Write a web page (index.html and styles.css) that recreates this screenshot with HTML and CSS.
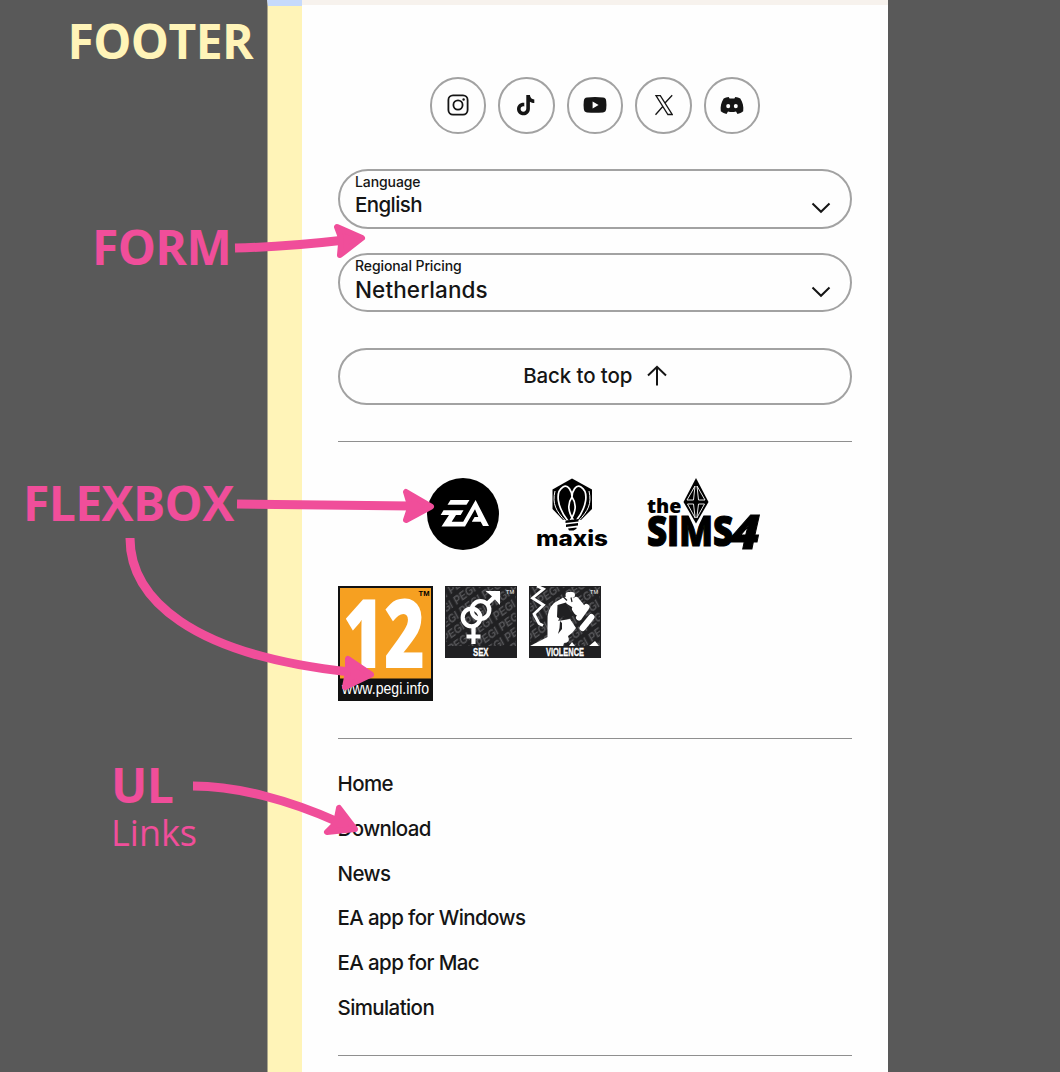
FILE: index.html
```html
<!DOCTYPE html>
<html lang="en">
<head>
<meta charset="utf-8">
<title>Footer structure</title>
<link rel="stylesheet" href="styles.css">
</head>
<body>
<div class="board">
  <aside class="notes">
    <h1 class="note note-footer">FOOTER</h1>
    <h2 class="note note-form">FORM</h2>
    <h2 class="note note-flex">FLEXBOX</h2>
    <h2 class="note note-ul">UL</h2>
    <p class="note-sub">Links</p>
  </aside>
  <div class="strip"></div>
  <footer class="panel">
    <nav class="social">
      <a class="circle"><svg width="22" height="22" viewBox="0 0 22 22" fill="none" stroke="#151515" stroke-width="1.8"><rect x="1.4" y="1.4" width="19.2" height="19.2" rx="4.6"/><circle cx="11" cy="11" r="4.6"/><circle cx="16.6" cy="5.5" r="1.2" fill="#151515" stroke="none"/></svg></a>
      <a class="circle"><svg width="20" height="22" viewBox="0 0 20 22" fill="#151515"><path d="M10.3 1h3.6c.3 2.7 1.8 4.3 4.4 4.5v3.6c-1.6 0-3.100-.5-4.400-1.400v7c0 4-2.900 6.600-6.500 6.600C3.800 21.300 1 18.500 1 15c0-3.900 3.100-6.700 7.300-6.300v3.700c-2-.5-3.700.7-3.700 2.600 0 1.600 1.200 2.700 2.700 2.700 1.800 0 3-1.200 3-3.200z"/></svg></a>
      <a class="circle"><svg width="24" height="18" viewBox="0 0 24 18" fill="#151515"><path fill-rule="evenodd" d="M4 1.500Q12 .6 20 1.500Q23 1.800 23.200 5Q23.700 9 23.200 13Q22.900 16.100 20 16.400Q12 17.300 4 16.400Q1.100 16.100.8 13Q.3 9 .8 5Q1.100 1.800 4 1.500zM9.600 5.600v6.800l6-3.400z"/></svg></a>
      <a class="circle"><svg width="20" height="22" viewBox="0 0 20 22" fill="none" stroke="#151515" stroke-width="1.300"><path d="M3 1.600h4.300L19.200 20.500h-4.300zM19.200 1.200l-7.700 8.300M10 12.300L2.500 20.800"/></svg></a>
      <a class="circle"><svg width="24" height="19" viewBox="0 0 24 19" fill="#151515"><path fill-rule="evenodd" d="M8.700 1C6.800 1.200 5.200 1.700 3.700 2.500C1.200 6.200.2 10.600.8 15.300c1.900 1.400 3.800 2.200 5.700 2.700l1.500-2.500c2.700.7 5.300.7 8 0l1.500 2.500c2-.5 3.900-1.300 5.700-2.700c.6-4.700-.4-9.100-2.900-12.800C18.800 1.700 17.200 1.200 15.300 1l-.9 1.600q-2.400-.3-4.800 0zM8.200 7.900a2 2.200 0 1 1 0 4.400a2 2.200 0 1 1 0-4.400zM15.800 7.900a2 2.200 0 1 1 0 4.400a2 2.200 0 1 1 0-4.400z"/></svg></a>
    </nav>

    <form class="form">
      <div class="select">
        <div class="field"><span class="label">Language</span><span class="value">English</span></div>
        <svg class="chevron" width="20" height="12" viewBox="0 0 20 12"><path d="M1.500 1.500L10 9.800L18.500 1.500"/></svg>
      </div>
      <div class="select">
        <div class="field"><span class="label">Regional Pricing</span><span class="value value-wide">Netherlands</span></div>
        <svg class="chevron" width="20" height="12" viewBox="0 0 20 12"><path d="M1.500 1.500L10 9.800L18.500 1.500"/></svg>
      </div>
    </form>

    <a class="to-top">Back to top
      <svg width="20" height="22" viewBox="0 0 20 22" fill="none" stroke="#151515" stroke-width="2"><path d="M10 21.500V3M1 11.500L10 2.800L19 11.500"/></svg>
    </a>

    <div class="logos">
      <svg width="72" height="72" viewBox="0 0 72 72">
        <circle cx="36" cy="36" r="36"/>
        <g fill="#fff">
          <path d="M23.500 22H42.500L39.500 26.800H20.500z"/>
          <path d="M16.500 32.300H36.500L33.700 37H29L24.700 43.700H36.200L48.600 22L62 48H56L53.700 43.700H44.800L47.600 39H51.300L48 31.300L38 48.500H14.500L22 37H13.700z"/>
        </g>
      </svg>
      <svg width="74" height="74" viewBox="0 0 74 74">
        <path d="M37 .5L57 11.500V31L46 42H28L17.500 31V11.500z"/>
        <g fill="none" stroke="#fff" stroke-width="1.700">
          <path d="M33 43C22 29 20 14 28 9C33 6 37 13 37 19C37 13 41 6 46 9C54 14 52 29 41 43"/>
          <path d="M37 19C32 26 33 34 39 43M37 19C42 26 41 34 35 43"/>
          <path d="M30.500 43C21 33 17 26 20 13M43.500 43C53 33 57 26 54 13" stroke-width="1"/>
        </g>
        <path d="M30.500 42.500L43.500 41V43.500L30.500 45zM31 46.500L43 45.100V47.500L31 49zM33 50.500L41.500 49.500V50.800L38.500 52.500H34z"/>
        <text class="maxis" x="1" y="67.500" textLength="72" lengthAdjust="spacingAndGlyphs">maxis</text>
      </svg>
      <svg class="sims" width="115" height="74" viewBox="0 0 115 74">
        <text class="the" x="0" y="35" textLength="34.500" lengthAdjust="spacingAndGlyphs">the</text>
        <text class="sims-word" x="0" y="67.500" textLength="86" lengthAdjust="spacingAndGlyphs">SIMS</text>
        <path d="M36.500 27L49 53L61.500 27z" fill="#fefefe"/>
        <path d="M49 0L61.500 24L49 45.500L36.500 24z"/>
        <path d="M48 8L46.500 22H40zM50 8L51.500 22H58zM40.500 26H46.500L48.200 40zM51.500 26H57.500L49.800 40z" fill="none" stroke="#fff" stroke-width=".9"/>
        <text class="four" x="84" y="70.500" textLength="29" lengthAdjust="spacingAndGlyphs">4</text>
      </svg>
    </div>

    <div class="ratings">
      <svg width="95" height="115" viewBox="0 0 95 115">
        <rect width="95" height="115" fill="#111"/>
        <rect x="2" y="2" width="91" height="90.500" fill="#f6a021"/>
        <text class="age" x="5" y="82" textLength="82" lengthAdjust="spacingAndGlyphs">12</text>
        <text class="tm-dark" x="80.500" y="9.500" textLength="11" lengthAdjust="spacingAndGlyphs">TM</text>
        <text class="pegi-url" x="4" y="108" textLength="87" lengthAdjust="spacingAndGlyphs">www.pegi.info</text>
      </svg>
      <svg class="badge" width="72" height="72" viewBox="0 0 72 72">
        <defs>
          <pattern id="pegi" width="28" height="12" patternUnits="userSpaceOnUse" patternTransform="rotate(-36) skewX(-8)">
            <text class="pegi" x="1" y="10.500" textLength="25" lengthAdjust="spacingAndGlyphs">PEGI</text>
          </pattern>
        </defs>
        <rect width="72" height="72" fill="#202022"/>
        <rect x="1" y="1" width="70" height="59" fill="url(#pegi)"/>
        <g fill="none" stroke="#fff" stroke-width="4.200">
          <circle cx="26.500" cy="31.500" r="8.800"/>
          <circle cx="35.500" cy="24" r="8.800"/>
          <path d="M28.500 40V58M21.500 50.500H35.500M42 18L52 8.500"/>
        </g>
        <path d="M40.500 5H55V19L50.500 14L46 9.500z" fill="#fff"/>
        <text class="tm-light" x="61" y="7.500" textLength="8" lengthAdjust="spacingAndGlyphs">TM</text>
        <text class="caption" x="28" y="69.500" textLength="15.500" lengthAdjust="spacingAndGlyphs">SEX</text>
      </svg>
      <svg class="badge" width="72" height="72" viewBox="0 0 72 72">
        <rect width="72" height="72" fill="#202022"/>
        <rect x="1" y="1" width="70" height="59" fill="url(#pegi)"/>
        <path d="M8 0L14.500 3L3.500 12L14.500 19L5 28L10 37.500L14 39.500" fill="none" stroke="#fff" stroke-width="2.800"/>
        <path d="M1 60L18.500 51V36Q17.500 24 25 17L35 11Q42 9 47 14L53 24L49 28L43 21L38 18L29 20L31 31L29 35L35 34L41 33L47 42L43 47L39 50Q42 57 35 57L34 60z" fill="#fff"/>
        <path d="M39.500 9L43 9M47 14L52 20M46 23L48 26M57.500 21L50 31.500M62.500 31L53.500 42" stroke="#fff" stroke-width="6" stroke-linecap="round" fill="none"/>
        <path d="M28.500 19L37 16.500L40 22L43 28L38 32L33 30L31 33L28 31zM31 35L33 37V43L29 48L30.500 42z" fill="#202022"/>
        <path d="M34 10.500L38 14.500M42 11.500L43 16" stroke="#202022" stroke-width="1.200"/>
        <path d="M60 60L66 55L70 60zM40 60L43 56L46 60z" fill="#fff"/>
        <text class="tm-light" x="61" y="7.500" textLength="8" lengthAdjust="spacingAndGlyphs">TM</text>
        <text class="caption" x="17" y="69.500" textLength="38" lengthAdjust="spacingAndGlyphs">VIOLENCE</text>
      </svg>
    </div>

    <ul class="links">
      <li>Home</li>
      <li>Download</li>
      <li>News</li>
      <li>EA app for Windows</li>
      <li>EA app for Mac</li>
      <li>Simulation</li>
    </ul>
  </footer>

  <svg class="arrows" width="1060" height="1072" viewBox="0 0 1060 1072">
    <g fill="none" stroke="#f04e9a" stroke-width="9">
      <path d="M235 248Q285 247 345 240"/>
      <path d="M237 504L412 506"/>
      <path d="M130 538C130 598 190 655 350 672"/>
      <path d="M193 786C237 786 289 800 338 822"/>
    </g>
    <g fill="#f04e9a" stroke="#f04e9a" stroke-width="6" stroke-linejoin="round">
      <path d="M362 238L337 227L340 235L341 244L340 255z"/>
      <path d="M431 506.500L406 492L409 502V511L406 520z"/>
      <path d="M371 674.500L348 659L348 669L347 677L345 687z"/>
      <path d="M355 829L339 808L337 818L333 826L327 832z"/>
    </g>
  </svg>
</div>
</body>
</html>
```
FILE: styles.css
```css
* { box-sizing: border-box; }

body {
  margin: 0;
  background: #595959;
  font-family: Inter, "Liberation Sans", sans-serif;
  font-weight: 450;
  color: #151515;
}

.board {
  position: relative;
  display: flex;
  width: 1060px;
  height: 1072px;
  overflow: hidden;
}

.notes {
  width: 267px;
  padding-top: 17px;
  color: #f04e9a;
  font-family: "Open Sans", "Noto Sans", sans-serif;
}

.note {
  margin: 0;
  font-size: 48px;
  line-height: 48px;
  font-weight: 700;
  letter-spacing: -.6px;
}

.note-footer { padding-left: 67.5px; color: #fff4b8; }
.note-form { margin-top: 158px; padding-left: 92px; }
.note-flex { margin-top: 208px; padding-left: 23px; }
.note-ul { margin-top: 234px; padding-left: 111px; }

.note-sub {
  margin: 0;
  padding-left: 111px;
  font-size: 36px;
  line-height: 48px;
  font-weight: 400;
}

.strip {
  width: 35px;
  border-top: 6px solid #c6dafc;
  border-left: 1px solid #aaa589;
  background: #fff4b8;
}

.panel {
  width: 586px;
  padding: 72px 36px 0 35.5px;
  border-top: 5px solid #f7f2ed;
  background: #fefefe;
}

.social {
  display: flex;
  justify-content: center;
  gap: 12px;
}

.circle {
  display: flex;
  align-items: center;
  justify-content: center;
  width: 56.5px;
  height: 56.5px;
  border: 2px solid #a2a2a2;
  border-radius: 50%;
}

.form {
  display: flex;
  flex-direction: column;
  gap: 24px;
  margin-top: 35.5px;
}

.select {
  display: flex;
  justify-content: space-between;
  height: 59.5px;
  padding: 1px 19px 0 15.5px;
  border: 2px solid #a2a2a2;
  border-radius: 30px;
}

.field { display: flex; flex-direction: column; }
.label { font-size: 14px; line-height: 19px; letter-spacing: -.1px; }
.value { font-size: 20.5px; line-height: 28px; letter-spacing: -.6px; }
.value-wide { font-size: 22.5px; line-height: 29px; letter-spacing: .1px; }

.chevron {
  margin-top: 30px;
  fill: none;
  stroke: #151515;
  stroke-width: 2;
}

.to-top {
  display: flex;
  align-items: center;
  justify-content: center;
  gap: 15px;
  height: 57px;
  margin-top: 35.5px;
  padding: 0 0 2px 1px;
  border: 2px solid #a2a2a2;
  border-radius: 29px;
  font-size: 20.5px;
  letter-spacing: -.1px;
}

.logos {
  display: flex;
  justify-content: center;
  gap: 36px;
  height: 109px;
  margin-top: 36px;
  padding-top: 36px;
  border-top: 1px solid #8f8f8f;
}

.logos svg { flex: none; overflow: visible; }
.sims { margin-left: 2px; }

.maxis { font-family: Inter, sans-serif; font-size: 22px; font-weight: 800; }
.the, .sims-word, .four, .age { font-family: "Open Sans", "Noto Sans", sans-serif; font-weight: 800; }
.the { font-size: 20px; }
.sims-word { font-size: 42px; stroke: #000; stroke-width: 1.2; }
.four { font-size: 48px; font-style: italic; stroke: #000; }

.ratings {
  display: flex;
  align-items: flex-start;
  gap: 12px;
  height: 116px;
  margin-top: 36px;
}

.age { font-size: 96px; fill: #fff; }

.pegi-url { font: 17px "Liberation Sans", sans-serif; fill: #fff; }
.tm-dark { font: bold 8px "Liberation Sans", sans-serif; }
.tm-light { font: 6px "Liberation Sans", sans-serif; fill: #fff; }
.caption { font: bold 11.5px "Liberation Sans", sans-serif; fill: #fff; stroke: #fff; stroke-width: .3; }
.pegi { font: bold 12px "Liberation Sans", sans-serif; fill: #57575a; }

.links {
  height: 318px;
  margin: 36px 0 0;
  padding: 23.5px 0 0;
  border-top: 1px solid #8f8f8f;
  border-bottom: 1px solid #8f8f8f;
  list-style: none;
  font-size: 20.5px;
  line-height: 44.8px;
  letter-spacing: -.6px;
}

.arrows { position: absolute; top: 0; left: 0; }
```
